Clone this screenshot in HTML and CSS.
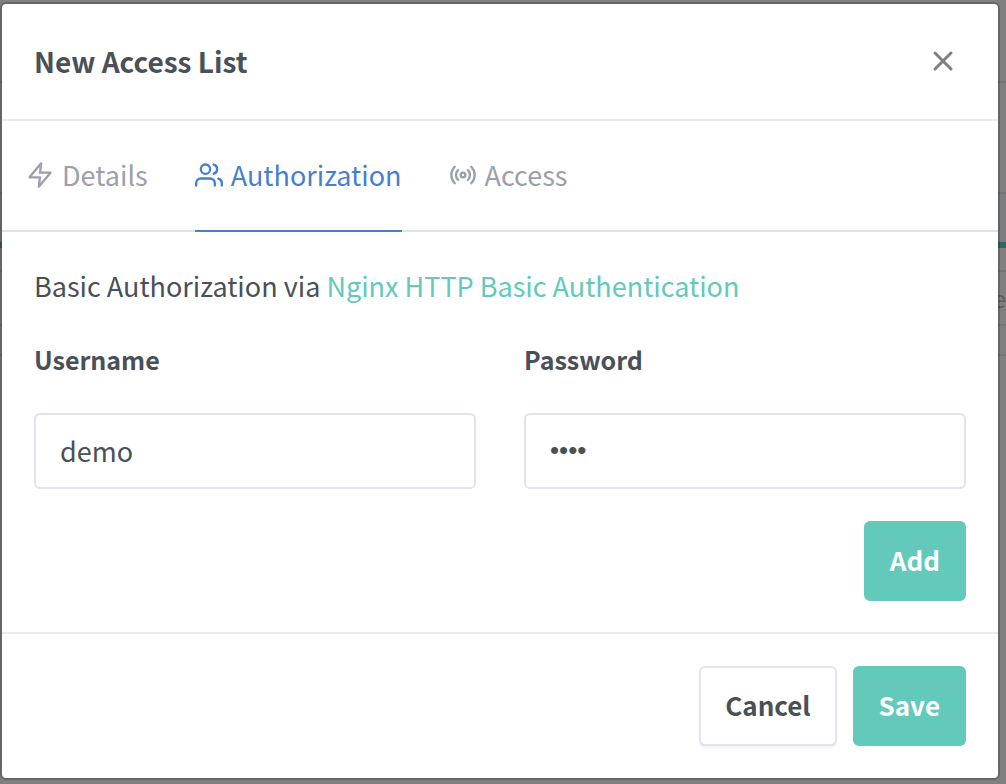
FILE: index.html
```html
<!DOCTYPE html>
<html lang="en">
<head>
<meta charset="utf-8">
<meta name="viewport" content="width=device-width, initial-scale=1">
<title>New Access List</title>
<link rel="stylesheet" href="styles.css">
</head>
<body>
<div class="backdrop" aria-hidden="true">
  <div class="page-row page-top"></div>
  <div class="page-row page-nav"></div>
  <div class="page-row page-accent"></div>
  <div class="page-row page-head"></div>
  <div class="page-row page-item">e</div>
  <div class="page-row page-foot"></div>
</div>
<form class="modal" role="dialog" aria-labelledby="modal-title">
  <header class="modal-header">
    <h1 class="modal-title" id="modal-title">New Access List</h1>
    <button class="close" type="button" aria-label="Close">
      <svg class="close-icon" viewBox="0 0 24 24"><path d="M4 4 20 20M20 4 4 20"/></svg>
    </button>
  </header>
  <nav class="tabs">
    <a class="tab" href="#details">
      <svg class="tab-icon" viewBox="0 0 24 24"><path d="M13 2 3 14h9l-1 8 10-12h-9l1-8z"/></svg>
      <span>Details</span>
    </a>
    <a class="tab tab-active" href="#authorization" aria-current="page">
      <svg class="tab-icon" viewBox="0 0 24 24"><path d="M17 21v-2a4 4 0 0 0-4-4H5a4 4 0 0 0-4 4v2"/><circle cx="9" cy="7" r="4"/><path d="M23 21v-2a4 4 0 0 0-3-3.870M16 3.130a4 4 0 0 1 0 7.750"/></svg>
      <span>Authorization</span>
    </a>
    <a class="tab" href="#access">
      <svg class="tab-icon" viewBox="0 0 24 24"><circle cx="12" cy="12" r="2"/><path d="M16.240 7.760a6 6 0 0 1 0 8.490M7.760 16.240a6 6 0 0 1 0-8.490M19.070 4.930a10 10 0 0 1 0 14.140M4.930 19.070a10 10 0 0 1 0-14.140"/></svg>
      <span>Access</span>
    </a>
  </nav>
  <section class="modal-body">
    <p class="intro">Basic Authorization via <a class="link" href="#nginx">Nginx HTTP Basic Authentication</a></p>
    <div class="fields">
      <div class="field">
        <label class="label" for="username">Username</label>
        <input class="input" id="username" type="text" value="demo" autocomplete="off">
      </div>
      <div class="field">
        <label class="label" for="password">Password</label>
        <input class="input input-password" id="password" type="password" value="demo" autocomplete="off">
      </div>
    </div>
    <div class="actions">
      <button class="btn btn-primary" type="button">Add</button>
    </div>
  </section>
  <footer class="modal-footer actions">
    <button class="btn btn-secondary" type="button">Cancel</button>
    <button class="btn btn-primary" type="submit">Save</button>
  </footer>
</form>
</body>
</html>
```
FILE: styles.css
```css
* { box-sizing: border-box; }

body {
  margin: 0;
  padding: 2px 6px 4px 0;
  background: #808080;
  color: #495057;
  font-family: "Noto Sans CJK SC", "Noto Sans", sans-serif;
  font-size: 27px;
  line-height: 40px;
}

.backdrop {
  position: absolute;
  inset: 0;
  overflow: hidden;
  text-align: right;
  color: #5b5e62;
}
.page-row { border-bottom: 2px solid #737477; }
.page-top { height: 83px; }
.page-nav { height: 111px; }
.page-accent { height: 54px; background: #7b7d7e; border-bottom: 6px solid #32695f; }
.page-head { height: 24px; }
.page-item { height: 54px; font-size: 24px; line-height: 52px; }
.page-foot { height: 30px; }

.modal {
  position: relative;
  background: #fff;
  background-clip: padding-box;
  border: 2px solid rgba(0, 0, 0, .2);
  border-radius: 6px;
}

.modal-header {
  display: flex;
  align-items: center;
  justify-content: space-between;
  padding: 37px 39px 38px 32px;
  border-bottom: 2px solid #e6ebef;
}
.modal-title { margin: 0; font-size: 28px; line-height: 40px; font-weight: 700; }
.close {
  display: flex;
  padding: 4px;
  border: 0;
  background: none;
  cursor: pointer;
}
.close-icon { width: 24px; height: 24px; fill: none; stroke: #808080; stroke-width: 3; stroke-linecap: round; }

.tabs {
  display: flex;
  gap: 47px;
  padding: 0 24px;
  box-shadow: inset 0 -2px #dee2e6;
}
.tab {
  display: flex;
  align-items: center;
  gap: 8px;
  padding: 34px 0 35px;
  border-bottom: 2px solid transparent;
  color: #9aa0ac;
  text-decoration: none;
}
.tab-active { color: #467fcf; border-color: #467fcf; }
.tab-icon {
  width: 28px;
  height: 28px;
  fill: none;
  stroke: currentColor;
  stroke-width: 2;
  stroke-linecap: round;
  stroke-linejoin: round;
}

.modal-body { padding: 34px 32px 31px; }
.intro { margin: 0 0 33px; }
.link { color: #63c9ba; text-decoration: none; }
.fields { display: grid; grid-template-columns: 1fr 1fr; gap: 48px; }
.label { display: block; margin-bottom: 34px; font-size: 25px; font-weight: 700; }
.input {
  display: block;
  width: 100%;
  height: 76px;
  padding: 0 24px 2px;
  border: 2px solid #e0e4ec;
  border-radius: 6px;
  background: #fff;
  color: #495057;
  font: inherit;
  outline: 0;
}
.input-password { font-family: "Liberation Sans", sans-serif; font-size: 26px; }

.actions { display: flex; justify-content: flex-end; gap: 16px; }
.modal-body .actions { margin-top: 32px; }
.modal-footer { padding: 32px; border-top: 2px solid #e8ebef; }
.btn {
  padding: 17px 24px 19px;
  border: 2px solid;
  border-radius: 6px;
  font: inherit;
  font-size: 26px;
  font-weight: 700;
  cursor: pointer;
}
.btn-primary { background: #63c9ba; border-color: #63c9ba; color: #fff; }
.btn-secondary {
  background: #fff;
  border-color: #e0e4ec;
  color: #495057;
  box-shadow: 0 2px 2px rgba(0, 0, 0, .05);
}
```
